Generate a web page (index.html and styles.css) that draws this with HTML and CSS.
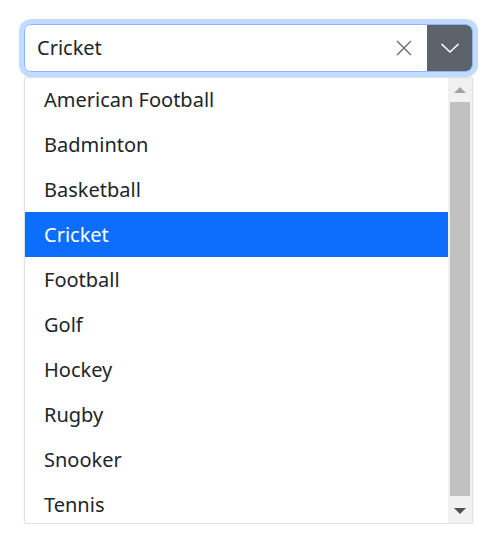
FILE: index.html
```html
<!DOCTYPE html>
<html>
<head>
<meta charset="utf-8">
<link rel="stylesheet" href="styles.css">
</head>
<body>
<div class="combo">
  <div class="field">Cricket</div>
  <button class="clear" aria-label="Clear">
    <svg width="16" height="16" viewBox="0 0 16 16"><path d="M1 1 L15 15 M15 1 L1 15" stroke="#6c757d" stroke-width="1.5" fill="none"/></svg>
  </button>
  <button class="toggle" aria-label="Toggle">
    <svg width="20" height="12" viewBox="0 0 20 12"><path d="M1.5 2 L10 10 L18.5 2" stroke="#fff" stroke-width="1.6" fill="none"/></svg>
  </button>
</div>
<div class="listbox">
  <ul class="items">
    <li class="item">American Football</li>
    <li class="item">Badminton</li>
    <li class="item">Basketball</li>
    <li class="item active">Cricket</li>
    <li class="item">Football</li>
    <li class="item">Golf</li>
    <li class="item">Hockey</li>
    <li class="item">Rugby</li>
    <li class="item">Snooker</li>
    <li class="item">Tennis</li>
  </ul>
  <div class="scrollbar">
    <div class="sb-btn"><span class="arrow-up"></span></div>
    <div class="sb-track"><div class="sb-thumb"></div></div>
    <div class="sb-btn"><span class="arrow-down"></span></div>
  </div>
</div>
</body>
</html>
```
FILE: styles.css
```css
html, body {
  margin: 0;
  background: #fff;
}
body {
  padding: 24px 23px 0 24px;
  font-family: "Segoe UI", "Noto Sans", "Open Sans", sans-serif;
  font-size: 20px;
  color: #212529;
}
.combo {
  width: 449px;
  height: 48px;
  box-sizing: border-box;
  border: 1px solid #86b7fe;
  border-radius: 7px;
  box-shadow: 0 0 0 5px rgba(13, 110, 253, 0.25);
  display: flex;
  align-items: stretch;
  overflow: hidden;
}
.field {
  flex: 1;
  display: flex;
  align-items: center;
  padding-left: 12px;
  line-height: 30px;
}
.clear {
  width: 40px;
  border: 0;
  background: transparent;
  padding: 0;
  display: flex;
  align-items: center;
  justify-content: center;
  margin-right: 3px;
}
.toggle {
  width: 45px;
  border: 0;
  padding: 0;
  background: #5c636a;
  display: flex;
  align-items: center;
  justify-content: center;
}
.listbox {
  margin-top: 5px;
  width: 449px;
  height: 447px;
  box-sizing: border-box;
  border: 1px solid #dee2e6;
  border-radius: 2px;
  box-shadow: 0 1px 3px rgba(0,0,0,0.08);
  display: flex;
  overflow: hidden;
}
.items {
  list-style: none;
  margin: 0;
  margin-top: -1px;
  padding: 0;
  flex: 1;
  overflow: hidden;
}
.item {
  height: 45px;
  line-height: 45px;
  padding-left: 19px;
  white-space: nowrap;
}
.item.active {
  background: #0d6efd;
  color: #fff;
}
.scrollbar {
  width: 24px;
  background: #f1f1f1;
  display: flex;
  flex-direction: column;
}
.sb-btn {
  height: 24px;
  display: flex;
  align-items: center;
  justify-content: center;
}
.sb-track {
  flex: 1;
  padding: 0 2px;
  display: flex;
  flex-direction: column;
}
.sb-thumb {
  flex: 1;
  background: #c1c1c1;
  margin-bottom: 3px;
}
.arrow-up {
  width: 0;
  height: 0;
  border-left: 6px solid transparent;
  border-right: 6px solid transparent;
  border-bottom: 6px solid #a3a3a3;
}
.arrow-down {
  width: 0;
  height: 0;
  border-left: 6px solid transparent;
  border-right: 6px solid transparent;
  border-top: 6px solid #505050;
}
```
